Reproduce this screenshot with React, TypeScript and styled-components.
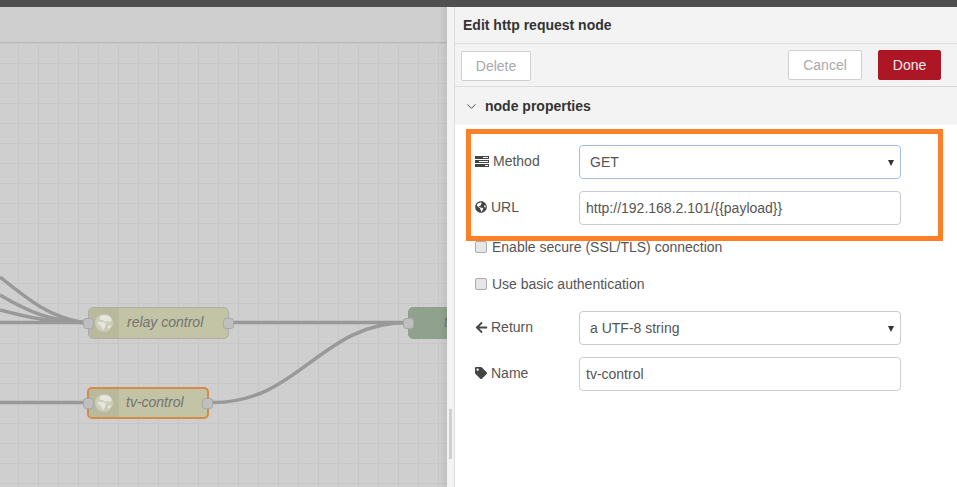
import React from "react";
import styled, { createGlobalStyle } from "styled-components";
import { FaGlobeAmericas, FaArrowLeft, FaTag } from "react-icons/fa";
import { ChevronDown } from "lucide-react";

const Global = createGlobalStyle`
  html, body { margin: 0; padding: 0; width: 957px; height: 487px; overflow: hidden; }
  * { box-sizing: border-box; }
  body { font-family: "Liberation Sans", Arial, sans-serif; font-size: 14px; color: #555; background: #fff; }
`;

const Page = styled.div`
  width: 957px; height: 487px; display: flex; flex-direction: column; overflow: hidden; position: relative;
`;
const TopBar = styled.div`height: 7px; background: #4f4f4f; flex: none;`;
const Main = styled.div`flex: 1; display: flex; min-height: 0;`;

const Workspace = styled.div`
  width: 447px; flex: none; display: flex; flex-direction: column; background: #cfcfcf; position: relative; overflow: hidden;
  &::after {
    content: ""; position: absolute; top: 0; right: 0; bottom: 0; width: 8px;
    background: linear-gradient(to right, rgba(0,0,0,0), rgba(0,0,0,0.07));
  }
`;
const TabBar = styled.div`height: 36px; flex: none; background: #cfcfcf; border-bottom: 1px solid #b8b8b8;`;
const Canvas = styled.div`
  flex: 1; position: relative;
  background-color: #cfcfcf;
  background-image:
    linear-gradient(to right, #c7c7c7 1px, transparent 1px),
    linear-gradient(to bottom, #c7c7c7 1px, transparent 1px);
  background-size: 20px 20px;
  background-position: 18px 20px;
`;
const Wires = styled.svg`position: absolute; left: 0; top: 0; width: 447px; height: 444px;`;

const Node = styled.div<{ $w: number; $top: number; $left: number; $selected?: boolean; $fill?: string }>`
  position: absolute; left: ${p => p.$left}px; top: ${p => p.$top}px; width: ${p => p.$w}px; height: 32px;
  background: ${p => p.$fill || "#c3c3a5"}; border-radius: 5px;
  border: ${p => (p.$selected ? "2px solid #d38a4b" : `1px solid ${p.$fill ? "#8fa08f" : "#aeaeae"}`)};
  display: flex; align-items: center;
`;
const NodeIcon = styled.div`
  width: 30px; align-self: stretch; flex: none; background: #b9b99c; border-radius: 4px 0 0 4px;
  display: flex; align-items: center; justify-content: center;
`;
const NodeLabel = styled.span<{ $pad?: number }>`
  font-style: italic; font-size: 14px; color: #737373; padding: 0 0 2px ${p => p.$pad ?? 8}px; white-space: nowrap;
`;
const Port = styled.div<{ $side: "l" | "r" }>`
  position: absolute; top: 50%; margin-top: -5.5px; width: 11px; height: 11px; border-radius: 3px;
  background: #bfbfbf; border: 1px solid #a9a9a9;
  ${p => (p.$side === "l" ? "left: -6px;" : "right: -6px;")}
`;

const Handle = styled.div`
  width: 8px; flex: none; background: #f3f3f3; border-right: 1px solid #dcdcdc; position: relative;
  &::after {
    content: ""; position: absolute; left: 2px; top: 402px; width: 3px; height: 50px; background: #cfcfcf;
  }
`;
const Tray = styled.div`flex: 1; display: flex; flex-direction: column; background: #fff; position: relative;`;
const TrayTitle = styled.div`
  height: 37px; flex: none; background: #f3f3f3; border-bottom: 1px solid #dcdcdc;
  font-weight: bold; font-size: 14px; color: #333; padding: 10px 0 0 8px; line-height: 16px;
`;
const Toolbar = styled.div`
  height: 43px; flex: none; background: #f3f3f3; border-bottom: 1px solid #dcdcdc;
  display: flex; align-items: flex-start; padding: 6px 16px 0 6px;
`;
const Button = styled.button<{ $primary?: boolean; $mt?: number; $w: number; $ml?: number }>`
  width: ${p => p.$w}px; height: 30px; margin-top: ${p => p.$mt || 0}px; margin-left: ${p => p.$ml ?? 0}px;
  font: 14px "Liberation Sans", Arial, sans-serif; border-radius: 2px; padding: 0;
  background: ${p => (p.$primary ? "#ad1625" : "#fff")};
  color: ${p => (p.$primary ? "#eee" : "#a9a9a9")};
  border: 1px solid ${p => (p.$primary ? "#ad1625" : "#cfcfcf")};
`;
const Spacer = styled.div`flex: 1;`;
const SectionHeader = styled.div`
  height: 38px; flex: none; background: #f3f3f3; display: flex; align-items: center; padding: 0 0 0 9px;
  font-weight: bold; font-size: 14px; color: #333; gap: 6px;
`;
const Form = styled.div`flex: 1; display: flex; flex-direction: column; padding: 20px 0 0 20px; background: #fff;`;
const Row = styled.div<{ $h: number; $mb?: number }>`
  display: flex; align-items: flex-start; height: ${p => p.$h}px; margin-bottom: ${p => p.$mb || 0}px;
`;
const Label = styled.label`
  width: 104px; flex: none; display: flex; align-items: center; gap: 4px; color: #555; font-size: 14px; height: 32px;
  svg { color: #444; }
`;
const ReturnIcon = styled(FaArrowLeft)`
  width: 13px; height: 13px; margin-right: -1px;
`;
const Field = styled.div<{ $focus?: boolean }>`
  width: 322px; height: 34px; border-radius: 4px; background: #fff; display: flex; align-items: center; position: relative;
  border: 1px solid ${p => (p.$focus ? "#a3bfdd" : "#cccccc")};
  padding-left: ${p => (p.$focus !== undefined ? 10 : 6)}px; color: #555; font-size: 14px;
`;
const Caret = styled.span`
  position: absolute; right: 6px; top: 14px; width: 0; height: 0;
  border-left: 3px solid transparent; border-right: 3px solid transparent; border-top: 6px solid #333;
`;
const CheckRow = styled.label`display: flex; align-items: center; gap: 5px; font-size: 14px; color: #555; height: 16px;`;
const Check = styled.span`
  width: 12px; height: 12px; border-radius: 2px; background: #e6e6e6; border: 1px solid #aaa; flex: none;
`;
const Highlight = styled.div`
  position: absolute; left: 11px; top: 122px; width: 477px; height: 112px; border: 5px solid #fd7f28;
  pointer-events: none;
`;

const TasksIcon = () => (
  <svg width="14" height="11" viewBox="0 0 14 11">
    <rect x="0" y="0" width="14" height="3" fill="#444" />
    <rect x="0" y="4" width="14" height="3" fill="#444" />
    <rect x="0" y="8" width="14" height="3" fill="#444" />
    <rect x="8" y="1" width="5" height="1" fill="#fff" />
    <rect x="4" y="5" width="9" height="1" fill="#fff" />
    <rect x="10" y="9" width="3" height="1" fill="#fff" />
  </svg>
);

const NodeGlobe = () => (
  <svg width="18" height="18" viewBox="0 0 18 18">
    <circle cx="9" cy="9" r="9" fill="#cdcdb9" />
    <path fill="#e6e6de" d="M5 2 L9 1 L14 2 L17 6 L15 8 L12 7 L10 8 L8 6 L5 6 Z" />
    <path fill="#e6e6de" d="M3 8 L9 8 L11 10 L10 13 L8 16 L7 15 L6 12 L3 10 Z" />
    <path fill="#e6e6de" d="M13 12 L16 11 L15 14 L13 14 Z" />
  </svg>
);

export default function App() {
  return (
    <Page>
      <Global />
      <TopBar />
      <Main>
        <Workspace>
          <TabBar />
          <Canvas>
            <Wires viewBox="0 0 447 444" fill="none" stroke="#999" strokeWidth="3.5">
              <path d="M0 234 C 30 258, 50 274, 83 279.5" />
              <path d="M0 252 C 30 270, 50 277, 83 279.5" />
              <path d="M0 267 C 30 275, 50 279, 83 279.5" />
              <path d="M0 279.5 H83" />
              <path d="M229 279.5 H408" />
              <path d="M0 359.5 H83" />
              <path d="M213 359.5 C 300 359.5, 320 279.5, 408 279.5" />
            </Wires>
            <Node $left={88} $top={264} $w={141}>
              <NodeIcon><NodeGlobe /></NodeIcon>
              <NodeLabel>relay control</NodeLabel>
              <Port $side="l" />
              <Port $side="r" />
            </Node>
            <Node $left={87} $top={344} $w={122} $selected>
              <NodeIcon><NodeGlobe /></NodeIcon>
              <NodeLabel $pad={7}>tv-control</NodeLabel>
              <Port $side="l" />
              <Port $side="r" />
            </Node>
            <Node $left={408} $top={264} $w={60} $fill="#90a28e">
              <NodeLabel $pad={35}>t</NodeLabel>
              <Port $side="l" />
            </Node>
          </Canvas>
        </Workspace>
        <Handle />
        <Tray>
          <TrayTitle>Edit http request node</TrayTitle>
          <Toolbar>
            <Button $w={70} $mt={1}>Delete</Button>
            <Spacer />
            <Button $w={74}>Cancel</Button>
            <Button $w={63} $ml={16} $primary>Done</Button>
          </Toolbar>
          <SectionHeader>
            <ChevronDown size={15} strokeWidth={1.5} color="#444" />
            node properties
          </SectionHeader>
          <Form>
            <Row $h={34} $mb={12}>
              <Label><TasksIcon />Method</Label>
              <Field $focus>GET<Caret /></Field>
            </Row>
            <Row $h={34} $mb={14}>
              <Label><FaGlobeAmericas size={12} />URL</Label>
              <Field>http://192.168.2.101/{"{{payload}}"}</Field>
            </Row>
            <Row $h={16} $mb={21}>
              <CheckRow><Check />Enable secure (SSL/TLS) connection</CheckRow>
            </Row>
            <Row $h={16} $mb={19}>
              <CheckRow><Check />Use basic authentication</CheckRow>
            </Row>
            <Row $h={34} $mb={12}>
              <Label><ReturnIcon />Return</Label>
              <Field $focus={false}>a UTF-8 string<Caret /></Field>
            </Row>
            <Row $h={34}>
              <Label><FaTag size={12} />Name</Label>
              <Field>tv-control</Field>
            </Row>
          </Form>
          <Highlight />
        </Tray>
      </Main>
    </Page>
  );
}
